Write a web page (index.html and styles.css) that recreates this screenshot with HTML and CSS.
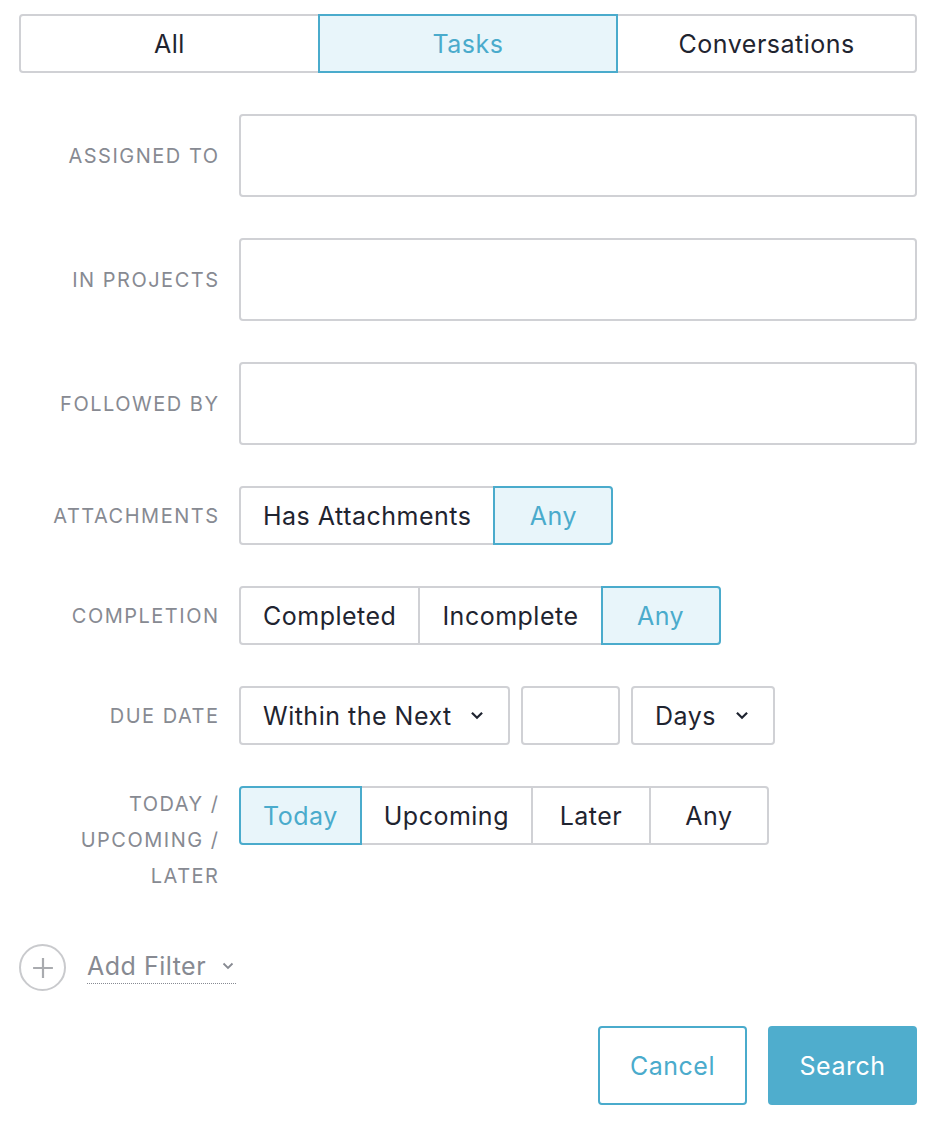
FILE: index.html
```html
<!DOCTYPE html>
<html lang="en">
<head>
  <meta charset="UTF-8" />
  <title>Advanced Search</title>
  <link rel="stylesheet" href="styles.css">
</head>
<body>

  <div class="panel">
    <!-- Search type tabs -->
    <div class="tabs">
      <button class="tab">All</button>
      <button class="tab active">Tasks</button>
      <button class="tab">Conversations</button>
    </div>

    <div class="filters">
      <div class="row">
        <label class="label">Assigned To</label>
        <input type="text" class="field">
      </div>

      <div class="row">
        <label class="label">In Projects</label>
        <input type="text" class="field">
      </div>

      <div class="row">
        <label class="label">Followed By</label>
        <input type="text" class="field">
      </div>

      <div class="row">
        <label class="label">Attachments</label>
        <div class="segments">
          <button class="seg">Has Attachments</button>
          <button class="seg active">Any</button>
        </div>
      </div>

      <div class="row">
        <label class="label">Completion</label>
        <div class="segments">
          <button class="seg">Completed</button>
          <button class="seg">Incomplete</button>
          <button class="seg active">Any</button>
        </div>
      </div>

      <div class="row">
        <label class="label">Due Date</label>
        <div class="due">
          <div class="select select-range">
            <span>Within the Next</span>
            <svg class="chev" viewBox="0 0 12 8"><path d="M1.5 1.5 L6 6 L10.5 1.5"/></svg>
          </div>
          <input type="text" class="num">
          <div class="select select-unit">
            <span>Days</span>
            <svg class="chev" viewBox="0 0 12 8"><path d="M1.5 1.5 L6 6 L10.5 1.5"/></svg>
          </div>
        </div>
      </div>

      <div class="row row-top">
        <label class="label">Today /<br>Upcoming /<br>Later</label>
        <div class="segments">
          <button class="seg active">Today</button>
          <button class="seg">Upcoming</button>
          <button class="seg">Later</button>
          <button class="seg">Any</button>
        </div>
      </div>
    </div>

    <div class="add-filter">
      <span class="plus">
        <svg viewBox="0 0 20 20"><path d="M10 1 V19 M1 10 H19"/></svg>
      </span>
      <span class="add-link">
        Add Filter
        <svg class="chev-sm" viewBox="0 0 12 8"><path d="M1.5 1.5 L6 6 L10.5 1.5"/></svg>
      </span>
    </div>

    <div class="actions">
      <button class="btn btn-cancel">Cancel</button>
      <button class="btn btn-search">Search</button>
    </div>
  </div>

</body>
</html>
```

FILE: styles.css
```css
* {
  box-sizing: border-box;
}

body {
  margin: 0;
  background: #fff;
  color: #1f2430;
  font-family: Inter, 'Open Sans', sans-serif;
}

button, input {
  font-family: inherit;
  letter-spacing: 0.5px;
}

.panel {
  width: 898px;
  margin-left: 19px;
  padding-top: 14px;
}

/* tabs */
.tabs {
  display: flex;
  height: 59px;
}

.tab {
  flex: 1;
  background: #fff;
  border: 2px solid #d0d1d5;
  margin-left: -2px;
  font-size: 25px;
  color: #1f2430;
  position: relative;
}

.tab:first-child {
  margin-left: 0;
  border-radius: 4px 0 0 4px;
}

.tab:last-child {
  border-radius: 0 4px 4px 0;
}

.tab.active,
.seg.active {
  background: #e8f5fa;
  border-color: #4aabcc;
  color: #4aabcc;
  z-index: 1;
}

/* filter rows */
.filters {
  display: flex;
  flex-direction: column;
  gap: 41px;
  margin-top: 41px;
}

.row {
  display: flex;
  align-items: center;
  gap: 21px;
}

.row-top {
  align-items: flex-start;
}

.label {
  width: 200.5px;
  flex-shrink: 0;
  margin-right: -1.5px; /* trailing letter-spacing */
  text-align: right;
  text-transform: uppercase;
  font-size: 20px;
  letter-spacing: 1.5px;
  line-height: 36px;
  color: #878a92;
}

.field {
  flex: 1;
  height: 83px;
  border: 2px solid #d0d1d5;
  border-radius: 4px;
}

/* segmented buttons */
.segments {
  display: flex;
  height: 59px;
}

.seg {
  min-width: 120px;
  padding: 0 22px;
  background: #fff;
  border: 2px solid #d0d1d5;
  margin-left: -2px;
  font-size: 25px;
  color: #1f2430;
  position: relative;
}

.seg:first-child {
  margin-left: 0;
  border-radius: 4px 0 0 4px;
}

.seg:last-child {
  border-radius: 0 4px 4px 0;
}

/* due date */
.due {
  display: flex;
  gap: 11px;
  height: 59px;
}

.select {
  display: flex;
  align-items: center;
  justify-content: space-between;
  padding: 0 24px 0 22px;
  border: 2px solid #d0d1d5;
  border-radius: 4px;
  font-size: 25px;
  letter-spacing: 0.5px;
}

.select-range {
  width: 271px;
}

.select-unit {
  width: 144px;
}

.num {
  width: 99px;
  border: 2px solid #d0d1d5;
  border-radius: 4px;
}

.chev {
  width: 14px;
  height: 9px;
  fill: none;
  stroke: #1f2430;
  stroke-width: 2;
}

/* add filter */
.add-filter {
  display: flex;
  align-items: center;
  gap: 21px;
  margin-top: 50px;
}

.plus {
  width: 47px;
  height: 47px;
  border: 2px solid #c9cacd;
  border-radius: 50%;
  display: flex;
  align-items: center;
  justify-content: center;
}

.plus svg {
  width: 22px;
  height: 22px;
  stroke: #a9abaf;
  stroke-width: 2;
}

.add-link {
  font-size: 25px;
  letter-spacing: 0.5px;
  color: #878a92;
  border-bottom: 1px dotted #878a92;
  padding-bottom: 2px;
  padding-right: 2px;
  display: flex;
  align-items: center;
  gap: 16px;
}

.chev-sm {
  width: 12px;
  height: 8px;
  fill: none;
  stroke: #878a92;
  stroke-width: 1.8;
}

/* actions */
.actions {
  display: flex;
  justify-content: flex-end;
  gap: 21px;
  margin-top: 35px;
}

.btn {
  width: 149px;
  height: 79px;
  border-radius: 4px;
  font-size: 25px;
}

.btn-cancel {
  background: #fff;
  border: 2px solid #4aabcc;
  color: #4aabcc;
}

.btn-search {
  background: #4fadcd;
  border: none;
  color: #fff;
}
```
